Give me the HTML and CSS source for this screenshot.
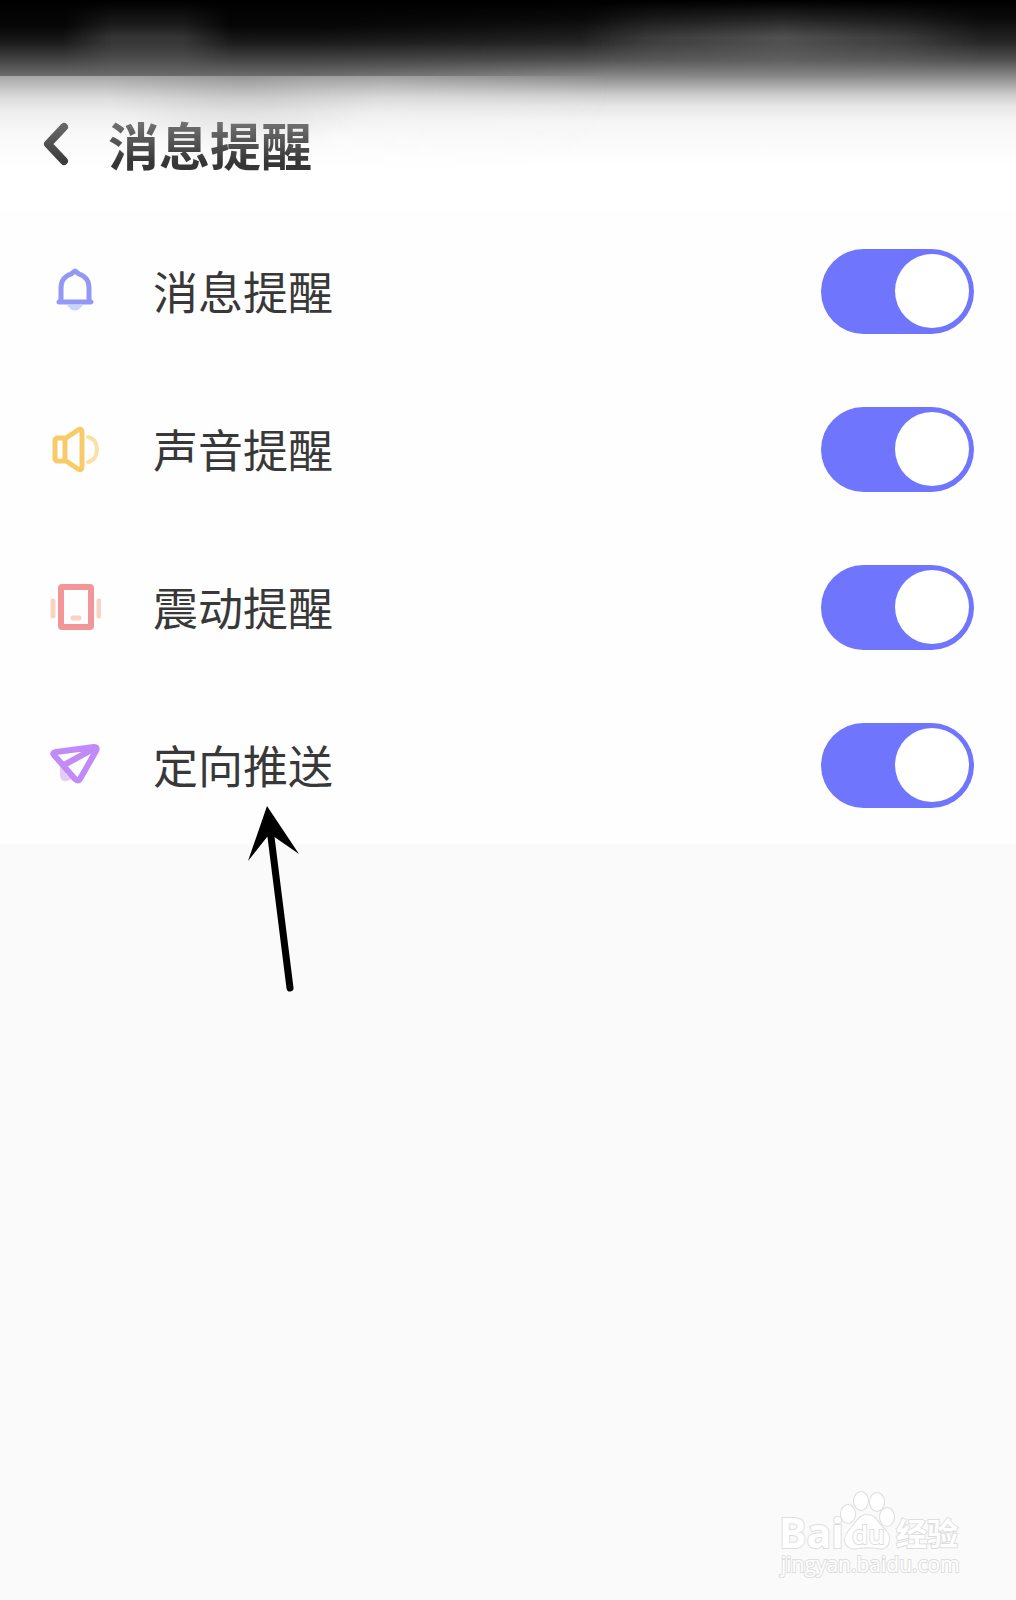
FILE: index.html
```html
<!DOCTYPE html>
<html lang="zh-CN">
<head>
  <meta charset="UTF-8" />
  <meta name="viewport" content="width=device-width, initial-scale=1" />
  <title>消息提醒</title>
  <link rel="stylesheet" href="styles.css">
</head>
<body>
  <div class="top">
    <header>
      <button type="button" class="back" aria-label="返回">
        <svg width="28" height="44" viewBox="0 0 28 44">
          <path d="M23 5 L7 22 L23 39" fill="none" stroke="url(#ink)" stroke-width="8" stroke-linecap="round" stroke-linejoin="round" />
          <defs>
            <linearGradient id="ink" x1="0" y1="0" x2="0" y2="1">
              <stop offset="0" stop-color="#666" />
              <stop offset="1" stop-color="#3c3c3c" />
            </linearGradient>
          </defs>
        </svg>
      </button>
      <h1>消息提醒</h1>
    </header>
  </div>
  <main>
    <ul class="settings">
      <li class="row">
        <svg class="icon" viewBox="0 0 52 52" fill="none" stroke-linecap="round" stroke-linejoin="round">
          <path d="M18 40 Q26 51 34 40 Z" fill="#c8d4fb" />
          <path d="M12 36 V23 C12 15 16 11 22 9 L26 6 L30 9 C36 11 40 15 40 23 V36 L42 37 H10 Z" stroke="#9298f4" stroke-width="5" />
        </svg>
        <label for="message">消息提醒</label>
        <input type="checkbox" class="switch" id="message" checked>
      </li>
      <li class="row">
        <svg class="icon" viewBox="0 0 52 52" fill="none" stroke-linecap="round" stroke-linejoin="round">
          <path d="M39 14 C51 16 51 37 39 39" stroke="#fbe0a6" stroke-width="4" />
          <path d="M17 15 H9 Q6 15 6 18 V35 Q6 38 9 38 H17 L29 46 Q33 48 33 44 V9 Q33 5 29 7 Z M16 15 V38" stroke="#f6cb68" stroke-width="5" />
        </svg>
        <label for="sound">声音提醒</label>
        <input type="checkbox" class="switch" id="sound" checked>
      </li>
      <li class="row">
        <svg class="icon" viewBox="0 0 52 52" fill="none" stroke-linecap="round" stroke-linejoin="round">
          <path d="M4 20 V35 M50 20 V35 M24 37 H30" stroke="#fad2c2" stroke-width="5" />
          <rect x="12" y="6" width="30" height="40" rx="1" stroke="#f3969a" stroke-width="6" />
        </svg>
        <label for="shake">震动提醒</label>
        <input type="checkbox" class="switch" id="shake" checked>
      </li>
      <li class="row">
        <svg class="icon" viewBox="0 0 52 52" fill="none" stroke-linecap="round" stroke-linejoin="round">
          <path d="M14 30 V37 Q15 41 20 38" stroke="#e3cbfb" stroke-width="6" />
          <path d="M5 16 Q3 14 7 13 L45 8 Q49 8 47 12 L31 40 Q29 43 26 40 Z M46 9 L15 26" stroke="#c18af8" stroke-width="6" />
        </svg>
        <label for="push">定向推送</label>
        <input type="checkbox" class="switch" id="push" checked>
        <svg class="arrow" width="60" height="190" viewBox="0 0 60 190">
          <path d="M26 24 L46 183" stroke="#000" stroke-width="7" stroke-linecap="round" />
          <path d="M23 1 L55 49 L29 31 L23 32 L4 56 Z" />
        </svg>
      </li>
    </ul>
  </main>
  <footer>
    <svg class="watermark" width="200" height="100" viewBox="0 0 200 100">
      <text class="brand" x="3" y="60">Bai</text>
      <ellipse cx="72" cy="26" rx="7" ry="9" />
      <ellipse cx="85" cy="13" rx="7" ry="9" />
      <ellipse cx="101" cy="14" rx="7" ry="9" />
      <ellipse cx="111" cy="29" rx="7" ry="9" />
      <path d="M91 27 C99 27 101 33 106 39 C111 43 114 47 113 53 C112 59 107 62 101 60 C95 59 88 59 82 60 C75 62 69 58 69 52 C69 46 73 43 77 38 C81 33 84 27 91 27 Z" />
      <text class="du" x="76" y="56">du</text>
      <text class="jingyan" x="120" y="57">经验</text>
      <text class="site" x="5" y="84">jingyan.baidu.com</text>
    </svg>
  </footer>
</body>
</html>
```

FILE: styles.css
```css
* {
  box-sizing: border-box;
  margin: 0;
  padding: 0;
}
body {
  font-family: 'Noto Sans CJK SC', sans-serif;
  background: #fafafa;
  color: #383838;
  min-height: 100vh;
  display: flex;
  flex-direction: column;
}
.top {
  position: relative;
  padding-top: 76px;
  background: linear-gradient(#000, #0c0c0c 20px, #262626 42px, #505050 60px, #888 76px, #a8a8a8 85px, #cdcdcd 95px, #e6e6e6 106px, #f6f6f6 122px, #fff 165px);
}
/* dark status strip with a hard lower edge, fading out to the right */
.top::before {
  content: "";
  position: absolute;
  inset: 0;
  background: linear-gradient(#000, #060606 26px, #1a1a1a 42px, #444 60px, #6c6c6c 76px, #a6a6a6 76px, #c2c2c2 87px, #dcdcdc 98px, #eee 112px, #f9f9f9 135px, #fff 170px);
  -webkit-mask-image: linear-gradient(90deg, #000 30%, transparent 60%);
  mask-image: linear-gradient(90deg, #000 30%, transparent 60%);
}
/* soft smudges */
.top::after {
  content: "";
  position: absolute;
  inset: 0 0 auto;
  height: 76px;
  background: linear-gradient(90deg, transparent 6%, rgba(255,255,255,0.14) 11%, rgba(255,255,255,0.14) 18%, transparent 23%, transparent 57%, rgba(255,255,255,0.12) 64%, rgba(255,255,255,0.22) 77%, rgba(255,255,255,0.12) 89%, transparent 97%);
  -webkit-mask-image: linear-gradient(transparent, #000 50%, transparent);
  mask-image: linear-gradient(transparent, #000 50%, transparent);
}
header {
  position: relative;
  z-index: 1;
  height: 136px;
  padding: 0 41px;
  display: flex;
  align-items: center;
  gap: 39px;
  background: radial-gradient(ellipse 14% 60% at 24% 0, rgba(0,0,0,0.1), transparent);
}
.back {
  display: flex;
  border: none;
  background: none;
  cursor: pointer;
}
h1 {
  font-size: 51px;
  line-height: 72px;
  font-weight: 700;
  color: transparent;
  background: linear-gradient(#777 15%, #363636 75%);
  -webkit-background-clip: text;
  background-clip: text;
}
main {
  background: #fefefe;
}
.settings {
  list-style: none;
}
.row {
  position: relative;
  height: 158px;
  padding: 0 42px 0 49px;
  display: flex;
  align-items: center;
}
.icon {
  width: 52px;
  height: 52px;
  margin-right: 52px;
}
.row label {
  flex-grow: 1;
  font-size: 45px;
  line-height: 64px;
}
.switch {
  appearance: none;
  width: 153px;
  height: 85px;
  padding: 5px;
  border-radius: 43px;
  background: #7075fe;
  display: flex;
  align-items: center;
  cursor: pointer;
}
.switch::before {
  content: "";
  width: 74px;
  height: 74px;
  border-radius: 50%;
  background: #fff;
}
.switch:checked {
  justify-content: flex-end;
}
.switch:not(:checked) {
  background: #ddd;
}
/* pointer over the last row */
.arrow {
  position: absolute;
  left: 244px;
  top: 119px;
}
footer {
  margin-top: auto;
  padding: 0 40px 12px;
  display: flex;
  justify-content: flex-end;
}
.watermark {
  fill: #fff;
  stroke: #dedede;
  stroke-width: 2px;
  paint-order: stroke;
}
.brand {
  font: 700 41px 'Open Sans', sans-serif;
}
.du {
  font: 600 26px 'Open Sans', sans-serif;
}
.jingyan {
  font: 700 31px 'Noto Sans CJK SC', sans-serif;
}
.site {
  font: 400 21px 'Open Sans', sans-serif;
}
```
